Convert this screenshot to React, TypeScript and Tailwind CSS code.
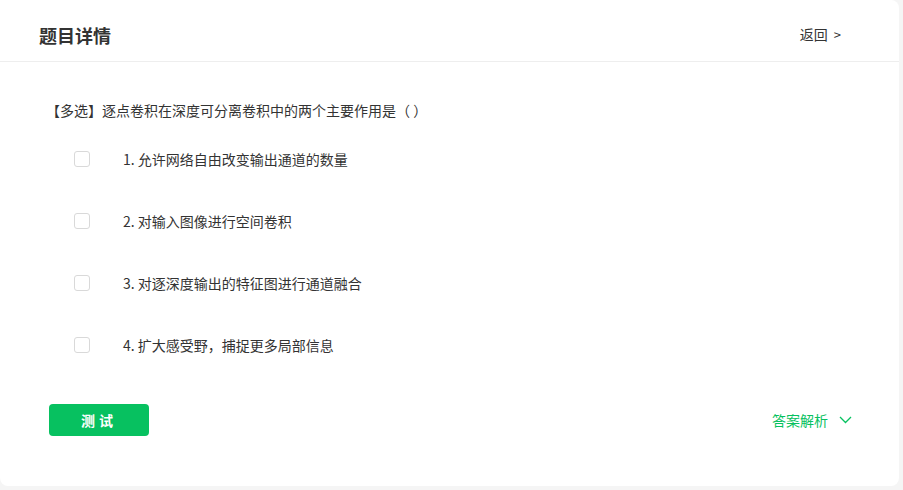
import React, { useState } from 'react';

const options = [
    '1. 允许网络自由改变输出通道的数量',
    '2. 对输入图像进行空间卷积',
    '3. 对逐深度输出的特征图进行通道融合',
    '4. 扩大感受野，捕捉更多局部信息',
];

const App: React.FC = () => {
    const [checked, setChecked] = useState<boolean[]>([false, false, false, false]);

    const toggle = (i: number) => {
        setChecked(cur => cur.map((c, idx) => (idx === i ? !c : c)));
    };

    return (
        <div
            className="w-[903px] h-[490px] bg-[#f5f5f5] overflow-hidden"
            style={{ fontFamily: '"Noto Sans CJK SC", "Noto Sans", sans-serif' }}
        >
            <div className="w-[899px] h-[486px] bg-white rounded-b-lg rounded-tr-lg flex flex-col">
                {/* header */}
                <div className="h-[62px] flex items-center justify-between pl-[39px] pr-[58px] pt-[8px] border-b border-[#eeeeee] shrink-0">
                    <h3 className="text-[18px] font-bold text-[#333333] leading-none">题目详情</h3>
                    <button className="text-[14px] text-[#333333] flex items-center gap-[6px]">
                        返回
                        <span className="text-[13px]">&gt;</span>
                    </button>
                </div>

                {/* body */}
                <div className="flex flex-col pl-[43px] pt-[38px]">
                    <p className="ml-[3px] text-[14px] leading-[20px] text-[#333333]">【多选】逐点卷积在深度可分离卷积中的两个主要作用是（ ）</p>

                    <div className="flex flex-col mt-[29px] gap-[42px]">
                        {options.map((opt, i) => (
                            <label key={i} className="flex items-center h-[20px] cursor-pointer">
                                <input
                                    type="checkbox"
                                    checked={checked[i]}
                                    onChange={() => toggle(i)}
                                    className="sr-only"
                                />
                                <span
                                    className={`ml-[31px] w-[16px] h-[16px] rounded-[3px] border ${checked[i] ? 'border-[#07c160] bg-[#07c160]' : 'border-[#d9d9d9] bg-white'}`}
                                />
                                <span className="ml-[33px] text-[14px] text-[#333333] leading-[20px]">{opt}</span>
                            </label>
                        ))}
                    </div>

                    <div className="flex items-center justify-between mt-[49px] pr-[47px]">
                        <button className="ml-[6px] w-[100px] h-[32px] rounded-[4px] bg-[#07c160] text-white text-[14px] font-semibold tracking-[4px]">
                            测试
                        </button>
                        <button className="flex items-center gap-[11px] text-[14px] text-[#07c160]">
                            答案解析
                            <svg width="13" height="8" viewBox="0 0 13 8" fill="none">
                                <path d="M1 1 L6.5 6.5 L12 1" stroke="#07c160" strokeWidth="1.3" />
                            </svg>
                        </button>
                    </div>
                </div>
            </div>
        </div>
    );
};

export default App;
